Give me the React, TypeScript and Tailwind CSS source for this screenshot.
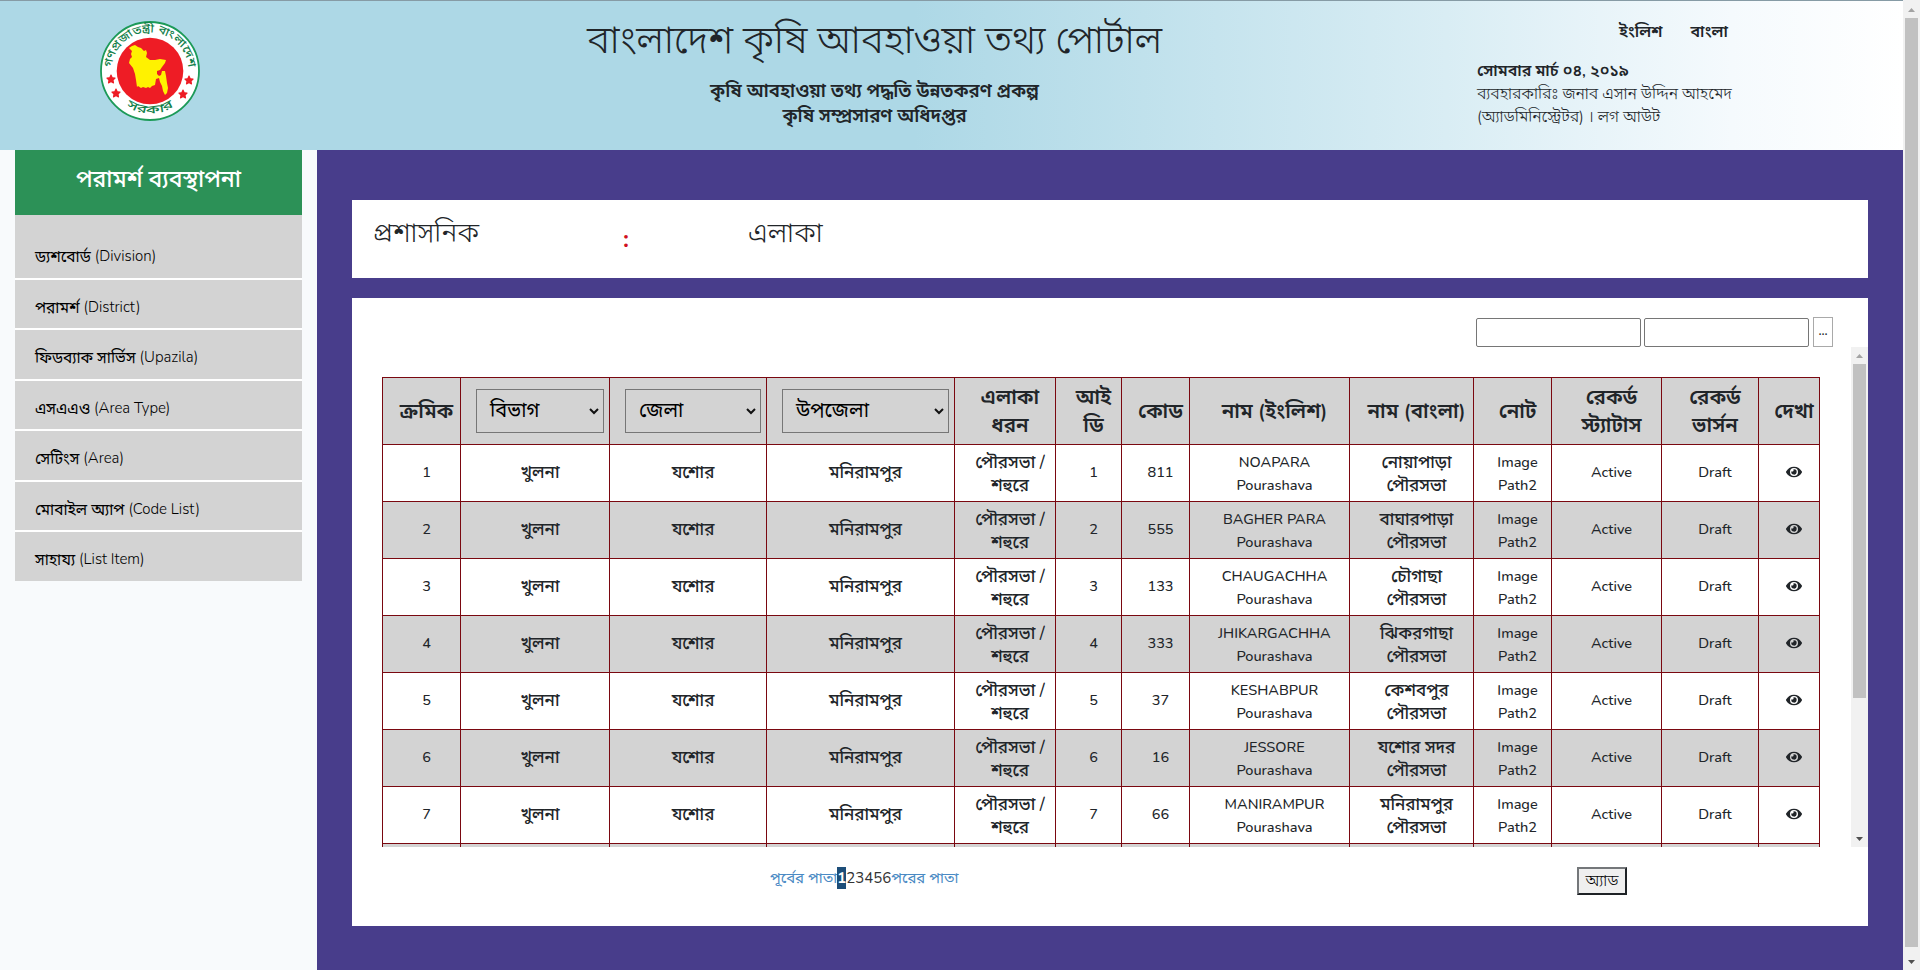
import React from "react";
import { FaEye, FaStar } from "react-icons/fa";

const menu = [
  { bn: "ড্যশবোর্ড", en: "(Division)", h: "h-[63px] pt-[20px]" },
  { bn: "পরামর্শ", en: "(District)", h: "h-12 pt-[7px]" },
  { bn: "ফিডব্যাক সার্ভিস", en: "(Upazila)", h: "h-[49px] pt-[6px]" },
  { bn: "এসএএও", en: "(Area Type)", h: "h-12 pt-[7px]" },
  { bn: "সেটিংস", en: "(Area)", h: "h-[49px] pt-[6px]" },
  { bn: "মোবাইল অ্যাপ", en: "(Code List)", h: "h-12 pt-[7px]" },
  { bn: "সাহায্য", en: "(List Item)", h: "h-[49px] pt-[6px]" },
];

const rows = [
  { code: "811", en: "NOAPARA", bn: "নোয়াপাড়া" },
  { code: "555", en: "BAGHER PARA", bn: "বাঘারপাড়া" },
  { code: "133", en: "CHAUGACHHA", bn: "চৌগাছা" },
  { code: "333", en: "JHIKARGACHHA", bn: "ঝিকরগাছা" },
  { code: "37", en: "KESHABPUR", bn: "কেশবপুর" },
  { code: "16", en: "JESSORE", bn: "যশোর সদর" },
  { code: "66", en: "MANIRAMPUR", bn: "মনিরামপুর" },
];

const COLS =
  "grid grid-cols-[78px_149px_157px_188px_101px_66px_68px_160px_124px_78px_110px_97px_61px]";

const cellStyles = {
  head: "pb-px text-[20.5px] font-semibold leading-[28px]",
  bn: "pb-[2px] text-[17px] font-medium leading-[23px]",
  bn2: "pt-px text-[17px] font-medium leading-[23px]",
  en: "pb-[2px] text-[14.5px] font-medium leading-[23px]",
  en2: "pt-px text-[14.5px] font-medium leading-[23px]",
};

function Cell({ children, kind = "en" }: { children?: React.ReactNode; kind?: keyof typeof cellStyles }) {
  return (
    <div
      className={
        "flex items-center justify-center border-r border-[#7a0810] pl-[15px] pr-[5px] text-center whitespace-nowrap " +
        cellStyles[kind]
      }
    >
      <div>{children}</div>
    </div>
  );
}

function Select({ label }: { label: string }) {
  return (
    <div className="flex items-center border-r border-[#7a0810] pl-[15px] pr-[5px]">
      <div className="flex h-11 w-full items-center justify-between border border-[#767676] pl-[13px] pr-1 text-xl text-black">
        <span>{label}</span>
        <svg width="10" height="7" viewBox="0 0 10 7" fill="none" stroke="#111" strokeWidth="2">
          <path d="M1 1l4 4 4-4" />
        </svg>
      </div>
    </div>
  );
}

function Arrow({ up, dim }: { up?: boolean; dim?: boolean }) {
  return (
    <svg width="17" height="17" viewBox="0 0 17 17" fill={dim ? "#a3a3a3" : "#505050"}>
      <path d={up ? "M5 11h7L8.5 7z" : "M5 7h7l-3.5 4z"} />
    </svg>
  );
}

function Emblem() {
  return (
    <svg width="100" height="100" viewBox="0 0 100 100" className="font-medium">
      <circle cx="50" cy="50" r="49" fill="#fff" stroke="#1c9a58" strokeWidth="1.8" />
      <circle cx="50" cy="50" r="33.3" fill="#ee1c25" />
      <path
        fill="#fff200"
        d="M32 25l3-1 3 2 3 1 3 3 2-1 1 3-1 4 4 3 5 0 5-1 6 1-1 3-3 4-2 3-3 1 0 3 2 2 2-1 1-4 3 0 1 5 1 7 1 5-1 5-2 2-2-4-1-5-2-4-1-4-3 1-1 6-3 1-2 2-2-1-2 1-3-1-2 1-3-2-1 1-1-7-1-6-2-6-4-5 1-4 2-2-1-3 1-3-3-3z"
      />
      <path id="top-arc" d="M11.5 50a38.5 38.5 0 0 1 77 0" fill="none" />
      <path id="low-arc" d="M19 79a42.5 42.5 0 0 0 62 0" fill="none" />
      <text fontSize="11.5" fill="#12804a">
        <textPath href="#top-arc" startOffset="50%" textAnchor="middle" textLength="114" lengthAdjust="spacingAndGlyphs">
          গণপ্রজাতন্ত্রী বাংলাদেশ
        </textPath>
      </text>
      <text fontSize="11.5" fill="#12804a">
        <textPath href="#low-arc" startOffset="50%" textAnchor="middle" textLength="50" lengthAdjust="spacingAndGlyphs">
          সরকার
        </textPath>
      </text>
      <g color="#ee1c25">
        <FaStar x="6" y="53" size={10} />
        <FaStar x="11" y="67" size={10} />
        <FaStar x="84" y="54" size={10} />
        <FaStar x="78" y="68" size={10} />
      </g>
    </svg>
  );
}

export default function App() {
  return (
    <div className="flex h-[970px] w-[1920px] overflow-hidden bg-[#f8fafc] font-['Nunito','Noto_Sans_Bengali','Lato',sans-serif] text-[#212529]">
      <div className="flex w-[1903px] flex-col">
        <header className="flex h-[150px] shrink-0 border-t border-[#869ba5] bg-[linear-gradient(to_right,#add8e6_0%,#add8e6_48%,#d9edf4_76%,#f5fafd_91%,#fff_100%)]">
          <div className="w-[300px] pl-[100px] pt-5">
            <Emblem />
          </div>
          <div className="w-[1149px] pt-[13px] text-center">
            <h1 className="text-[39px] font-light leading-[54px]">বাংলাদেশ কৃষি আবহাওয়া তথ্য পোর্টাল</h1>
            <p className="mt-[11px] text-[18.6px] font-semibold leading-[25px]">
              কৃষি আবহাওয়া তথ্য পদ্ধতি উন্নতকরণ প্রকল্প
              <br />
              কৃষি সম্প্রসারণ অধিদপ্তর
            </p>
          </div>
          <div className="pl-[28px] pt-[19px] text-base leading-[23px]">
            <div className="flex gap-7 pl-[142px] font-semibold leading-6">
              <span>ইংলিশ</span>
              <span>বাংলা</span>
            </div>
            <div className="mt-4 font-semibold">সোমবার মার্চ ০৪, ২০১৯</div>
            <div className="font-light">ব্যবহারকারিঃ জনাব এসান উদ্দিন আহমেদ</div>
            <div className="font-light">(অ্যাডমিনিস্ট্রেটর) । লগ আউট</div>
          </div>
        </header>

        <div className="flex min-h-0 grow">
          <aside className="w-[317px] pl-[15px] pr-[15px]">
            <h2 className="flex h-[65px] items-center justify-center bg-[#2c9157] pb-[4px] text-[23px] font-medium text-white">
              পরামর্শ ব্যবস্থাপনা
            </h2>
            <nav className="flex flex-col gap-[2px] bg-white">
              {menu.map((m) => (
                <a
                  key={m.en}
                  className={"flex items-center gap-1 bg-[#d3d3d3] pl-5 text-[15px] font-light text-black " + m.h}
                >
                  <span className="text-[15.5px] font-normal">{m.bn}</span>
                  <span>{m.en}</span>
                </a>
              ))}
            </nav>
          </aside>

          <main className="w-[1586px] bg-[#483d8b] pl-[35px] pr-[35px] pt-[50px]">
            <section className="flex h-[78px] bg-white pl-[21px] pt-[15px] text-[27.5px] font-light leading-9">
              <span className="w-[250px]">প্রশাসনিক</span>
              <span className="w-[125px] pt-[6px] text-2xl font-bold leading-9 text-[#d01020]">:</span>
              <span>এলাকা</span>
            </section>

            <section className="mt-5 flex h-[628px] flex-col bg-white">
              <div className="flex h-[49px] shrink-0 items-end justify-end pr-[35px]">
                <input className="h-[29px] w-[165px] rounded-[2px] border border-[#767676]" />
                <input className="ml-[3px] h-[29px] w-[165px] rounded-[2px] border border-[#767676]" />
                <button className="ml-1 h-[30px] w-5 border border-[#a9a9a9] text-[13px] font-semibold">...</button>
              </div>
              <div className="flex h-[500px] justify-between pl-[30px]">
                <div className="h-[500px] w-[1438px] overflow-hidden pt-[30px]">
                  <div className={COLS + " h-[68px] w-[1438px] border-y border-l border-[#7a0810] bg-[#d3d3d3]"}>
                    <Cell kind="head">ক্রমিক</Cell>
                    <Select label="বিভাগ" />
                    <Select label="জেলা" />
                    <Select label="উপজেলা" />
                    <Cell kind="head">এলাকা<br />ধরন</Cell>
                    <Cell kind="head">আই<br />ডি</Cell>
                    <Cell kind="head">কোড</Cell>
                    <Cell kind="head">নাম (ইংলিশ)</Cell>
                    <Cell kind="head">নাম (বাংলা)</Cell>
                    <Cell kind="head">নোট</Cell>
                    <Cell kind="head">রেকর্ড<br />স্ট্যাটাস</Cell>
                    <Cell kind="head">রেকর্ড<br />ভার্সন</Cell>
                    <Cell kind="head">দেখা</Cell>
                  </div>
                  {rows.map((r, i) => (
                    <div
                      key={r.en}
                      className={
                        COLS +
                        " h-[57px] w-[1438px] border-b border-l border-[#7a0810] " +
                        (i % 2 ? "bg-[#d3d3d3]" : "bg-white")
                      }
                    >
                      <Cell>{i + 1}</Cell>
                      <Cell kind="bn">খুলনা</Cell>
                      <Cell kind="bn">যশোর</Cell>
                      <Cell kind="bn">মনিরামপুর</Cell>
                      <Cell kind="bn2">পৌরসভা /<br />শহুরে</Cell>
                      <Cell>{i + 1}</Cell>
                      <Cell>{r.code}</Cell>
                      <Cell kind="en2">{r.en}<br />Pourashava</Cell>
                      <Cell kind="bn2">{r.bn}<br />পৌরসভা</Cell>
                      <Cell kind="en2">Image<br />Path2</Cell>
                      <Cell>Active</Cell>
                      <Cell>Draft</Cell>
                      <Cell><FaEye size={16} /></Cell>
                    </div>
                  ))}
                  <div className={COLS + " h-[57px] w-[1438px] border-l border-[#7a0810] bg-[#d3d3d3]"}>
                    {Array.from({ length: 13 }, (_, i) => (
                      <Cell key={i} />
                    ))}
                  </div>
                </div>
                <div className="flex w-[17px] flex-col items-center bg-[#f1f1f1]">
                  <Arrow up dim />
                  <div className="h-[334px] w-[13px] shrink-0 bg-[#c1c1c1]" />
                  <div className="grow" />
                  <Arrow />
                </div>
              </div>
              <div className="flex items-start pt-5">
                <div className="flex h-[22px] w-[1225px] items-center pl-[418px] text-[15px] text-[#4a8ac4]">
                  <span>পূর্বের পাতা</span>
                  <b className="bg-[#1d4e79] text-white">1</b>
                  <span className="text-[#333]">23456</span>
                  <span>পরের পাতা</span>
                </div>
                <button className="h-7 w-[50px] border-2 border-b-[#1e2226] border-l-[#74777a] border-r-[#1e2226] border-t-[#74777a] bg-[#efefef] text-base font-light leading-6 text-black">
                  অ্যাড
                </button>
              </div>
            </section>
          </main>
        </div>
      </div>
      <div className="flex w-[17px] flex-col items-center bg-[#f1f1f1] pt-px">
        <Arrow up dim />
        <div className="h-[929px] w-[13px] shrink-0 bg-[#c1c1c1]" />
        <div className="grow" />
        <Arrow />
      </div>
    </div>
  );
}
